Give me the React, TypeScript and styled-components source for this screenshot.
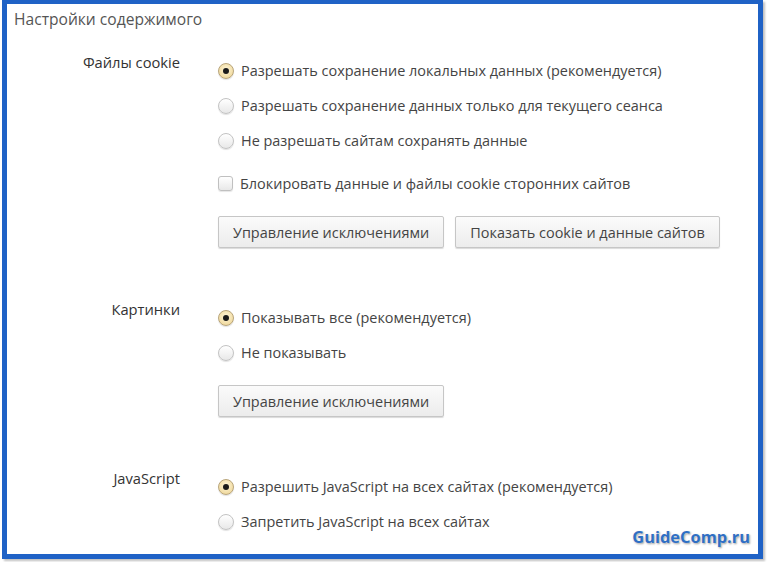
import styled, { createGlobalStyle } from "styled-components";

const GlobalStyle = createGlobalStyle`
  html, body {
    margin: 0;
    padding: 0;
    background: #ffffff;
  }
  body {
    font-family: "Open Sans", "Liberation Sans", sans-serif;
    width: 768px;
    height: 562px;
    overflow: hidden;
  }
`;

type Option = { text: string; checked?: boolean };

type Section = {
  label: string;
  options: Option[];
  checkbox?: string;
  buttons: string[];
};

const sections: Section[] = [
  {
    label: "Файлы cookie",
    options: [
      { text: "Разрешать сохранение локальных данных (рекомендуется)", checked: true },
      { text: "Разрешать сохранение данных только для текущего сеанса" },
      { text: "Не разрешать сайтам сохранять данные" },
    ],
    checkbox: "Блокировать данные и файлы cookie сторонних сайтов",
    buttons: ["Управление исключениями", "Показать cookie и данные сайтов"],
  },
  {
    label: "Картинки",
    options: [
      { text: "Показывать все (рекомендуется)", checked: true },
      { text: "Не показывать" },
    ],
    buttons: ["Управление исключениями"],
  },
  {
    label: "JavaScript",
    options: [
      { text: "Разрешить JavaScript на всех сайтах (рекомендуется)", checked: true },
      { text: "Запретить JavaScript на всех сайтах" },
    ],
    buttons: [],
  },
];

export default function App() {
  return (
    <>
      <GlobalStyle />
      <Frame>
        <Title>Настройки содержимого</Title>
        <Sections>
          {sections.map((s) => (
            <SectionRow key={s.label}>
              <Label>{s.label}</Label>
              <Controls>
                {s.options.map((o) => (
                  <OptionRow key={o.text}>
                    <Radio $checked={!!o.checked} />
                    <OptionText>{o.text}</OptionText>
                  </OptionRow>
                ))}
                {s.checkbox && (
                  <CheckRow>
                    <Checkbox />
                    <OptionText>{s.checkbox}</OptionText>
                  </CheckRow>
                )}
                {s.buttons.length > 0 && (
                  <ButtonBar>
                    {s.buttons.map((b) => (
                      <Button key={b}>{b}</Button>
                    ))}
                  </ButtonBar>
                )}
              </Controls>
            </SectionRow>
          ))}
        </Sections>
        <Watermark>GuideComp.ru</Watermark>
      </Frame>
    </>
  );
}

const Frame = styled.div`
  position: relative;
  box-sizing: border-box;
  margin: 0 5px 0 2px;
  width: 761px;
  height: 559px;
  border: 5px solid #1f62c6;
  border-top-width: 4px;
  background: #ffffff;
  box-shadow: 2px 2px 2px rgba(0, 0, 0, 0.25);
  padding: 5px 0 0 7px;
  overflow: hidden;
`;

const Title = styled.h1`
  margin: 0;
  font-size: 15.6px;
  line-height: 20px;
  font-weight: 400;
  color: #555555;
`;

const Sections = styled.div`
  display: flex;
  flex-direction: column;
  gap: 52px;
  margin-top: 24px;
`;

const SectionRow = styled.div`
  display: grid;
  grid-template-columns: 166px 1fr;
  column-gap: 38px;
  align-items: start;
`;

const Label = styled.div`
  text-align: right;
  font-size: 14.7px;
  line-height: 20px;
  margin-top: -1px;
  color: #333333;
  white-space: nowrap;
`;

const Controls = styled.div`
  display: flex;
  flex-direction: column;
`;

const OptionRow = styled.div`
  display: flex;
  align-items: center;
  height: 35px;
  gap: 7px;
`;

const CheckRow = styled(OptionRow)`
  margin-top: 8px;
`;

const OptionText = styled.span`
  font-size: 14.45px;
  color: #444444;
  white-space: nowrap;
`;

const Radio = styled.span<{ $checked: boolean }>`
  position: relative;
  box-sizing: border-box;
  width: 16px;
  height: 16px;
  border-radius: 50%;
  border: 1px solid ${({ $checked }) => ($checked ? "#b9a57a" : "#c3c3c3")};
  background: ${({ $checked }) =>
    $checked
      ? "radial-gradient(circle at 50% 40%, #fff6d8 0%, #f1dca4 70%, #e2c98a 100%)"
      : "linear-gradient(#ffffff, #e8e8e8)"};
  box-shadow: 0 1px 1px rgba(0, 0, 0, 0.12);

  &::after {
    content: "";
    display: ${({ $checked }) => ($checked ? "block" : "none")};
    position: absolute;
    left: 50%;
    top: 50%;
    width: 6px;
    height: 6px;
    margin: -3px 0 0 -3px;
    border-radius: 50%;
    background: #1a1a1a;
  }
`;

const Checkbox = styled.span`
  box-sizing: border-box;
  width: 15px;
  height: 15px;
  border-radius: 3px;
  border: 1px solid #c0c0c0;
  background: linear-gradient(#ffffff, #e8e8e8);
  box-shadow: 0 1px 1px rgba(0, 0, 0, 0.1);
`;

const ButtonBar = styled.div`
  display: flex;
  gap: 11px;
  margin-top: 15px;
`;

const Button = styled.button`
  box-sizing: border-box;
  height: 32px;
  padding: 0 14px;
  font-family: "Open Sans", "Liberation Sans", sans-serif;
  font-size: 14.45px;
  color: #444444;
  background: linear-gradient(#fbfbfb, #ececec);
  border: 1px solid #c6c6c6;
  border-radius: 2px;
  box-shadow: 0 1px 1px rgba(0, 0, 0, 0.15);
`;

const Watermark = styled.div`
  position: absolute;
  right: 8px;
  bottom: 6px;
  font-family: "Open Sans", "Liberation Sans", sans-serif;
  font-weight: 700;
  font-size: 16.4px;
  color: #2f6fc4;
  text-shadow: 0 0 2px #ffffff, 1px 1px 2px rgba(0, 0, 0, 0.45);
`;
